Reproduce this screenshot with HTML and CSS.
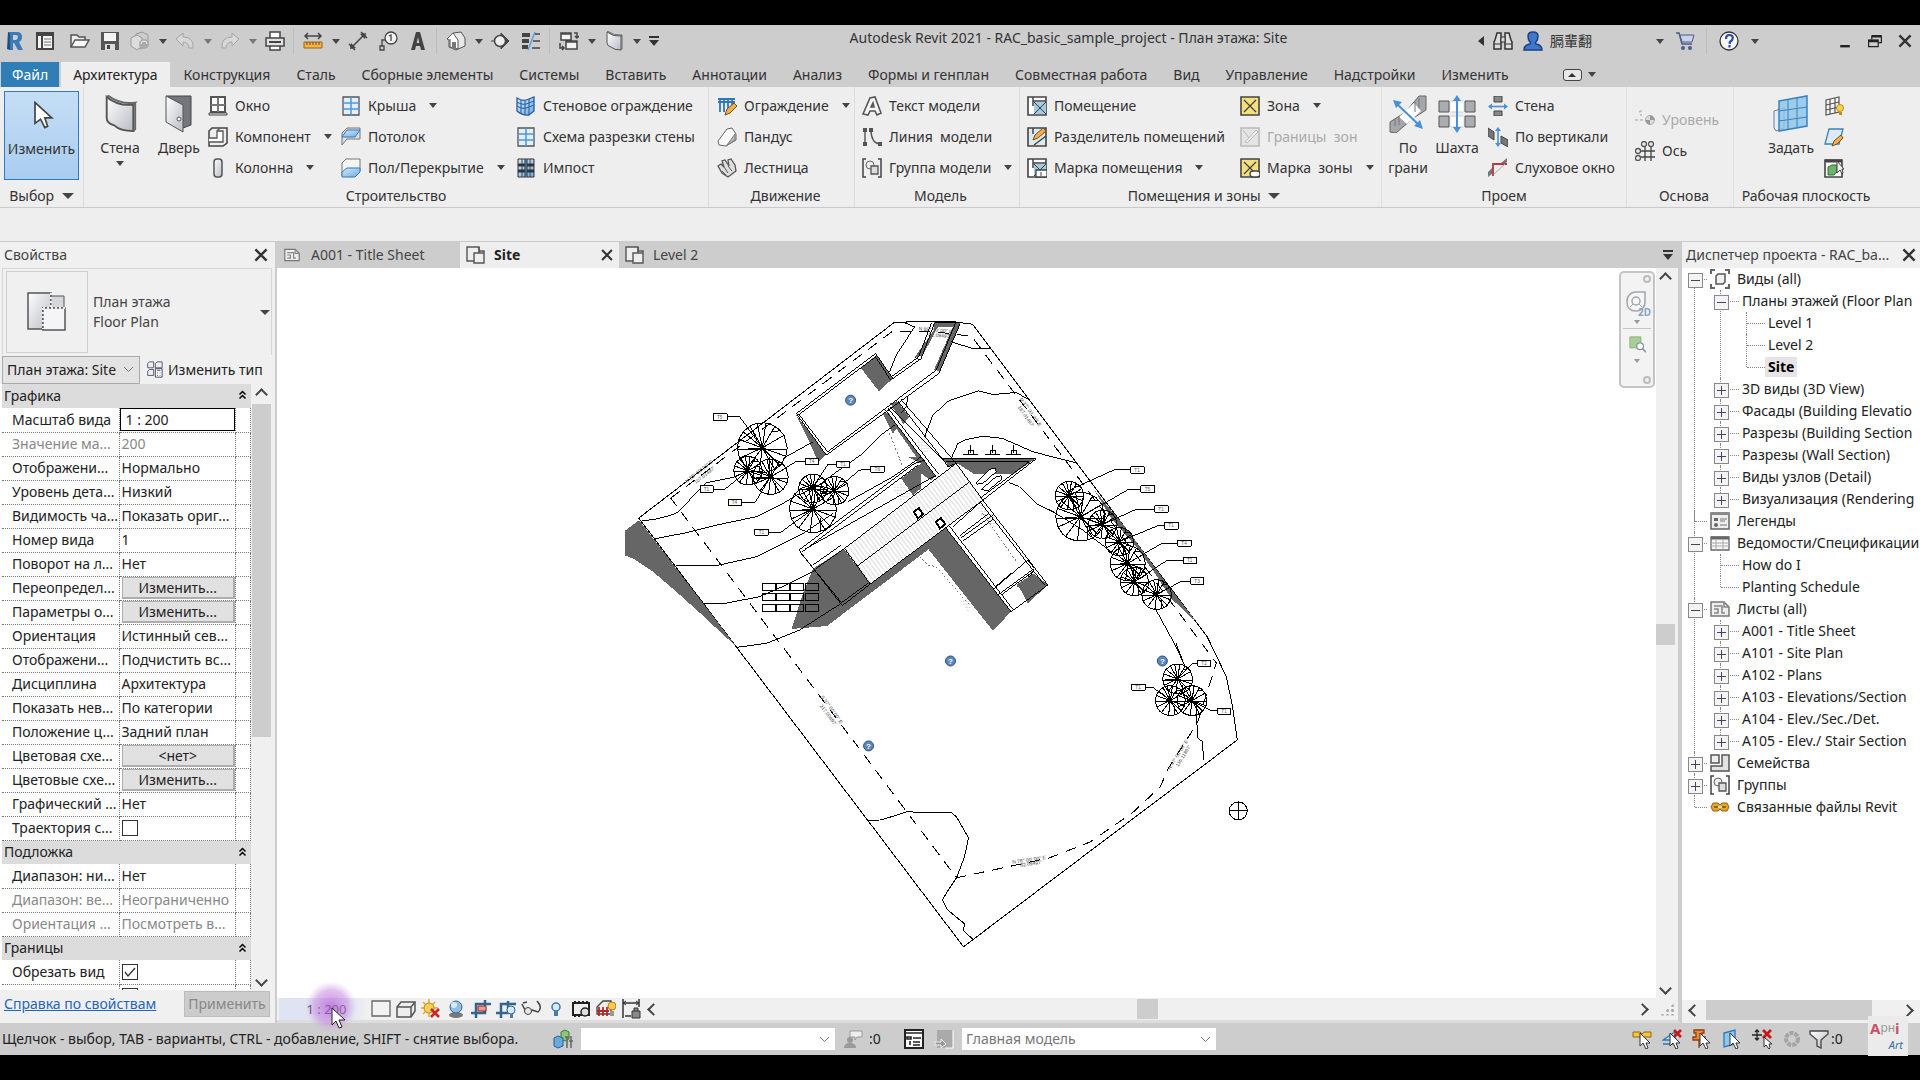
FILE: index.html
```html
<!DOCTYPE html>
<html lang="ru">
<head>
<meta charset="utf-8">
<title>Autodesk Revit 2021 - RAC_basic_sample_project - План этажа: Site</title>
<link rel="stylesheet" href="styles.css">
</head>
<body>
<svg class="defs" aria-hidden="true">
<defs>
<linearGradient id="gr" x1="0" y1="0" x2="1" y2="1"><stop offset="0" stop-color="#fff"/><stop offset="1" stop-color="#b9bcc4"/></linearGradient>
<linearGradient id="bl" x1="0" y1="0" x2="1" y2="1"><stop offset="0" stop-color="#d3e9fb"/><stop offset="1" stop-color="#6fabdf"/></linearGradient>
<radialGradient id="glow"><stop offset="0" stop-color="#b45fd6" stop-opacity=".75"/><stop offset=".65" stop-color="#c88be2" stop-opacity=".55"/><stop offset="1" stop-color="#d9b0ec" stop-opacity="0"/></radialGradient>
<symbol id="revit" viewBox="0 0 20 20"><path d="M3 1h9q5 0 5 5 0 4-3 5l4 8h-5l-4-7H8v7H4Z" fill="#3b7cb8"/><path d="M3 1l2 2v16l-3-1Z" fill="#1d4f86"/><path d="M8 4h3q2 0 2 2t-2 3H8Z" fill="#cfcfcf"/></symbol>
<symbol id="home" viewBox="0 0 20 20"><path d="M2 2h16v16H2Z" fill="#f4f4f4" stroke="#444" stroke-width="2"/><path d="M2 4h16M7 5v13" stroke="#444" stroke-width="2"/><path d="M9 8h7M9 11h7M9 14h7" stroke="#777"/></symbol>
<symbol id="open" viewBox="0 0 20 20"><path d="M1 16V4h6l2 2h6v3" fill="#eee" stroke="#555" stroke-width="1.5"/><path d="M1 16L5 9h14l-4 7Z" fill="#fafafa" stroke="#555" stroke-width="1.5"/></symbol>
<symbol id="save" viewBox="0 0 20 20"><path d="M1 1h18v18H1Z" fill="#555"/><path d="M4 2h12v8H4Z" fill="#f5f5f5"/><path d="M5 13h10v6H5Z" fill="#ddd"/><path d="M7 14h3v4H7Z" fill="#444"/></symbol>
<symbol id="sync" viewBox="0 0 20 20"><path d="M6 3l6-2 6 3v10l-7 4-6-3Z" fill="#ccc" stroke="#999"/><path d="M1 7l6-3 5 3v8l-5 4-6-4Z" fill="#ddd" stroke="#999"/><circle cx="14" cy="13" r="5" fill="#aaa"/><path d="M11 13a3 3 0 0 1 6 0" stroke="#eee" fill="none"/></symbol>
<symbol id="undo" viewBox="0 0 20 20"><path d="M1 8l7-6v4q11 0 10 11h-4q0-6-6-6v4Z" fill="#d8d8d8" stroke="#a6a6a6"/></symbol>
<symbol id="redo" viewBox="0 0 20 20"><path d="M19 8l-7-6v4Q1 6 2 17h4q0-6 6-6v4Z" fill="#d8d8d8" stroke="#a6a6a6"/></symbol>
<symbol id="print" viewBox="0 0 20 20"><path d="M5 7V1h10v6M5 14v5h10v-5" fill="#fff" stroke="#444" stroke-width="1.5"/><path d="M1 7h18v8H1Z" fill="#e3e3e3" stroke="#444" stroke-width="1.5"/><path d="M4 11h12" stroke="#444" stroke-width="2"/></symbol>
<symbol id="measure" viewBox="0 0 20 20"><path d="M2 5h16M5 2L2 5l3 3M15 2l3 3-3 3" stroke="#444" fill="none" stroke-width="1.5"/><path d="M1 11h18v6H1Z" fill="#efb34a" stroke="#9a6616"/><path d="M4 11v3M7 11v3M10 11v3M13 11v3M16 11v3" stroke="#7a4c08"/></symbol>
<symbol id="dim" viewBox="0 0 20 20"><path d="M4 16L16 4M1 13l6 6M13 1l6 6" stroke="#444" stroke-width="1.5"/><path d="M2 18l1-6 5 5ZM18 2l-6 1 5 5Z" fill="#444"/></symbol>
<symbol id="tag" viewBox="0 0 20 20"><circle cx="13" cy="7" r="6" fill="#f3f3f3" stroke="#444" stroke-width="1.3"/><path d="M11 5l2-1v6M7 9H4v6M2 15h4v4H2Z" stroke="#444" fill="none" stroke-width="1.3"/></symbol>
<symbol id="textA" viewBox="0 0 20 20"><path d="M3 19L8 1h4l5 18h-4l-1-4H8l-1 4ZM8.700 12h2.600L10 6Z" fill="#444" fill-rule="evenodd"/></symbol>
<symbol id="house" viewBox="0 0 20 20"><path d="M1 8l6-6 8-1 4 6v8l-9 4-7-3V9Z" fill="#e8e8e8" stroke="#555"/><path d="M1 8l6-6 5 7v9l-8-2V8" fill="#fff" stroke="#555"/><path d="M6 11h4v7H6Z" fill="#777"/></symbol>
<symbol id="sect" viewBox="0 0 20 20"><path d="M10 2l8 8-8 8ZM5 10H0" fill="#444" stroke="#444"/><circle cx="9" cy="10" r="5.500" fill="#eee" stroke="#444" stroke-width="1.500"/></symbol>
<symbol id="thin" viewBox="0 0 20 20"><path d="M1 4h8M1 10h7M1 16h6" stroke="#444" stroke-width="4"/><path d="M13 3h6M12 10h7M11 17h8" stroke="#444" stroke-width="1.300"/><path d="M14 1L7 19" stroke="#5b9fd8" stroke-width="1.500"/></symbol>
<symbol id="wins" viewBox="0 0 20 20"><path d="M2 2h10v7H2ZM7 10h11v8H7Z" fill="#f4f4f4" stroke="#444" stroke-width="1.500"/><path d="M2 3h10M7 11h11M1 12v5h4M3 15l2 2-2 2M15 2h3v5M16 5l2 2 2-2" stroke="#444" fill="none" stroke-width="1.500"/></symbol>
<symbol id="wall" viewBox="0 0 20 20"><path d="M3 1q6 5 14 4v14q-7 0-10-3-4-1-4-4Z" fill="url(#gr)" stroke="#555"/><path d="M3 1l1-.500q6 4.500 14 3.500l-1 1M17 19l1-1V4" fill="none" stroke="#666"/></symbol>
<symbol id="bino" viewBox="0 0 20 20"><path d="M2 9l2-7h4v16H1v-7ZM18 9l-2-7h-4v16h7v-7Z" fill="#ddd" stroke="#333" stroke-width="1.500"/><path d="M8 6h4v5H8ZM1 13h7M12 13h7" fill="#ddd" stroke="#333"/></symbol>
<symbol id="user" viewBox="0 0 20 20"><path d="M1 19q0-5 6-6 1-1 0-2-2-2-2-6 0-4 5-4t5 4q0 4-2 6-1 1 0 2 6 1 6 6Z" fill="#3f78cb" stroke="#1c3f87" stroke-width="1.500"/></symbol>
<symbol id="cart" viewBox="0 0 20 20"><path d="M1 2h3l3 11h10" fill="none" stroke="#4b5c8c" stroke-width="1.500"/><path d="M5 4h14l-2 7H7Z" fill="#c9d2e8" stroke="#4b5c8c"/><circle cx="8" cy="17" r="2" fill="#4b5c8c"/><circle cx="15" cy="17" r="2" fill="#4b5c8c"/></symbol>
<symbol id="help" viewBox="0 0 20 20"><circle cx="10" cy="10" r="9" fill="#f7f7f7" stroke="#333" stroke-width="1.300"/><path d="M7 8q0-4 3.300-4 3.500 0 3.500 3 0 2-3 4v2M10.500 14v2.500" fill="none" stroke="#2b4ea8" stroke-width="2.200"/></symbol>
<symbol id="min" viewBox="0 0 20 20"><path d="M4 15h12v3H4Z" fill="#222"/></symbol>
<symbol id="restore" viewBox="0 0 20 20"><path d="M6 8V4h12v8h-4" fill="none" stroke="#222" stroke-width="1.500"/><path d="M6 4h12M2 10h12" stroke="#222" stroke-width="3"/><path d="M2 9h12v8H2Z" fill="none" stroke="#222" stroke-width="1.500"/></symbol>
<symbol id="x" viewBox="0 0 20 20"><path d="M3 3l14 14M17 3L3 17" stroke="#333" stroke-width="3"/></symbol>
<symbol id="arrow" viewBox="0 0 20 20"><path d="M5 1v15l4-3 3 6 2-1-2-6h5Z" fill="#fff" stroke="#444" stroke-width="1.200"/></symbol>
<symbol id="door" viewBox="0 0 28 38"><path d="M1 1h25v29l-8 3" fill="#74767c" stroke="#444"/><path d="M1 1l17 9v27L1 27Z" fill="url(#gr)" stroke="#555"/><circle cx="14" cy="24" r="2" fill="#fff" stroke="#555"/></symbol>
<symbol id="window" viewBox="0 0 20 20"><path d="M3 1h14v15H3Z" fill="#fff" stroke="#555" stroke-width="2"/><path d="M10 2v14M3 9h14" stroke="#777" stroke-width="2"/><path d="M1 17h18v2H1Z" fill="#eee" stroke="#444"/></symbol>
<symbol id="comp" viewBox="0 0 20 20"><path d="M1 4l3-3h15v15l-4 3H1Z" fill="#eee" stroke="#444" stroke-width="1.500"/><path d="M1 11h8V4h6v11H1M9 4l3-3" fill="#fff" stroke="#555" stroke-width="1.300"/></symbol>
<symbol id="column" viewBox="0 0 20 20"><rect x="6" y="1" width="8" height="18" rx="3" fill="url(#gr)" stroke="#555" stroke-width="1.500"/></symbol>
<symbol id="roof" viewBox="0 0 20 20"><path d="M2 1h16v18H2Z" fill="#e2effa" stroke="#555" stroke-width="1.300"/><path d="M10 1v18M2 7h16M2 13h16" stroke="#4f97dc" stroke-width="1.500"/></symbol>
<symbol id="ceil" viewBox="0 0 20 20"><path d="M1 6l5-5h13v11H6l-5 6Z" fill="#ddd" stroke="#777"/><path d="M6 3h13l-5 7H1Z" fill="url(#bl)" stroke="#2f78c4"/></symbol>
<symbol id="floor" viewBox="0 0 20 20"><path d="M1 5l4-4h14v12l-5 5H1Z" fill="#f4f4f4" stroke="#777"/><path d="M1 18v-4l5-4h13v4l-5 5H1Z" fill="url(#bl)" stroke="#2f78c4"/></symbol>
<symbol id="curtain" viewBox="0 0 20 20"><path d="M1 2q6 4 12 1l5-2v14l-5 4q-6 1-12-4Z" fill="url(#bl)" stroke="#245d9c" stroke-width="1.300"/><path d="M1 6q6 4 12 1l5-2M1 10q6 4 12 1l5-2M5 4v13M9 5v14M13 3v16" fill="none" stroke="#245d9c"/></symbol>
<symbol id="mullion" viewBox="0 0 20 20"><path d="M2 1h16v18H2Z" fill="url(#bl)" stroke="#333"/><path d="M6 1v18M14 1v18" stroke="#444" stroke-width="1"/><path d="M10 1v18M2 7h16M2 13h16" stroke="#333" stroke-width="3"/><path d="M10 1v18" stroke="#4f9be0"/></symbol>
<symbol id="rail" viewBox="0 0 20 20"><path d="M1 3h17M1 6h17M3 3v13M7 3v13M11 3v12M15 3v8" stroke="#3077bd" stroke-width="1.800"/><path d="M8 19l2-6 7-6 3 3-7 7Z" fill="#efb052" stroke="#7c4e12"/></symbol>
<symbol id="ramp" viewBox="0 0 20 20"><path d="M1 14L10 2l5-1 4 6v6l-10 6-7-1Z" fill="#fafafa" stroke="#666"/><path d="M10 18l8-11v6l-9 6Z" fill="#bbb" stroke="#777"/></symbol>
<symbol id="stair" viewBox="0 0 20 20"><path d="M1 8l3-2 3 3-2-6 3-1 4 6-1-6 3-1 4 6 1 6-8 6-6-4Z" fill="#ddd" stroke="#555" stroke-width="1.300"/><path d="M7 9l4 6M11 8l4 5M5 13l4 4" stroke="#555"/></symbol>
<symbol id="mtext" viewBox="0 0 20 20"><path d="M1 18L8 2l5-1 6 16-4 2-2-4H8l-2 4ZM9 11h3l-1-4Z" fill="#f5f5f5" stroke="#555" stroke-width="1.600"/></symbol>
<symbol id="mline" viewBox="0 0 20 20"><path d="M3 3v14M9 3q0 13 9 14" fill="none" stroke="#555" stroke-width="1.400"/><path d="M1 1h4v4H1ZM1 15h4v4H1ZM7 1h4v4H7ZM16 15h4v4h-4Z" fill="#555"/></symbol>
<symbol id="group" viewBox="0 0 20 20"><path d="M4 1H1v18h3M16 1h3v18h-3" fill="none" stroke="#444" stroke-width="1.500"/><circle cx="8" cy="7" r="4" fill="#eee" stroke="#666"/><path d="M9 8h7v8H9Z" fill="#ddd" stroke="#555" stroke-width="1.300"/></symbol>
<symbol id="room" viewBox="0 0 20 20"><path d="M1 1h18v18H1Z" fill="#fff" stroke="#444" stroke-width="1.600"/><path d="M6 1v9M6 5h13" stroke="#444" stroke-width="1.500"/><path d="M7 6h12v12H7Z" fill="#a9c9da"/><path d="M7 6l12 12M19 6L7 18" stroke="#245"/></symbol>
<symbol id="roomsep" viewBox="0 0 20 20"><path d="M1 1h18v18H1Z" fill="#dceaf2" stroke="#444" stroke-width="1.600"/><path d="M6 1v6M7 18l12-9" stroke="#444" stroke-width="1.500"/><path d="M6 13l2-5 8-7 3 3-8 7Z" fill="#efb052" stroke="#7c4e12"/></symbol>
<symbol id="roomtag" viewBox="0 0 20 20"><use href="#room"/><path d="M9 12h11v7H9Z" fill="#fff" stroke="#444" stroke-width="1.300"/><path d="M14 14v4" stroke="#444"/></symbol>
<symbol id="zone" viewBox="0 0 20 20"><path d="M1 1h18v18H1Z" fill="#f3df7c" stroke="#444" stroke-width="1.600"/><path d="M4 4l12 12M16 4L4 16" stroke="#444" stroke-width="1.300"/></symbol>
<symbol id="zonesep" viewBox="0 0 20 20"><path d="M1 1h18v18H1Z" fill="#e4e4e4" stroke="#bbb" stroke-width="1.600"/><path d="M5 15L16 3l2 2L7 16ZM3 3l6 8" fill="#eee" stroke="#bbb"/></symbol>
<symbol id="zonetag" viewBox="0 0 20 20"><use href="#zone"/><rect x="10" y="13" width="10" height="6" rx="3" fill="#fff" stroke="#444" stroke-width="1.300"/></symbol>
<symbol id="face" viewBox="0 0 38 38"><path d="M1 37V27l14-9 6 8-14 12ZM19 14L30 1h7v14l-11 7Z" fill="#a4a6aa" stroke="#666"/><path d="M10 22L25 8l7 8-14 13Z" fill="#fff"/><path d="M6 31V24M10 30V21M30 13V3M26 17V7" stroke="#777"/><path d="M7 8l24 23" stroke="#4a90d9" stroke-width="2"/><path d="M4 5l9 2-6 6ZM34 34l-3-9-6 6Z" fill="#4a90d9"/></symbol>
<symbol id="shaft" viewBox="0 0 38 38"><path d="M1 6h10v11H1ZM27 6h10v11H27ZM1 21h10v11H1ZM27 21h10v11H27Z" fill="#aaacb0" stroke="#555"/><path d="M13 6h12v11H13ZM13 21h12v11H13Z" fill="#fff"/><path d="M13 6h12M13 17h12M13 21h12M13 32h12" stroke="#ccc"/><path d="M19 4v30" stroke="#4a90d9" stroke-width="2"/><path d="M19 0l4 6h-8ZM19 38l4-6h-8Z" fill="#4a90d9"/></symbol>
<symbol id="opw" viewBox="0 0 20 20"><path d="M6 0h8v6H6ZM6 15h8v5H6Z" fill="#888" stroke="#444"/><path d="M2 10.500h16" stroke="#4a90d9" stroke-width="1.600"/><path d="M0 10.500l4-3v6ZM20 10.500l-4-3v6Z" fill="#4a90d9"/></symbol>
<symbol id="opv" viewBox="0 0 20 20"><path d="M0 1l6 4v8l-6-4ZM13 9l7 4v7l-7-4Z" fill="#777" stroke="#444"/><path d="M10 2v16" stroke="#4a90d9" stroke-width="1.600"/><path d="M10 0l3 4H7ZM10 20l3-4H7Z" fill="#4a90d9"/></symbol>
<symbol id="dormer" viewBox="0 0 20 20"><path d="M0 19v-5l5-5v6ZM13 5l6-5v4l-3 2Z" fill="#777"/><path d="M5 18V6h14" fill="none" stroke="#b8383d" stroke-width="1.800"/><path d="M6 16L17 6" stroke="#aaa"/></symbol>
<symbol id="level" viewBox="0 0 20 20"><path d="M0 10h10M4 2l2-1v5" stroke="#bbb" stroke-width="1.500" stroke-dasharray="3 2" fill="none"/><circle cx="15" cy="10" r="4.500" fill="#ddd" stroke="#aaa"/><path d="M15 10V5.500A4.500 4.500 0 0 1 19.500 10ZM15 10v4.500A4.500 4.500 0 0 1 10.500 10Z" fill="#999"/></symbol>
<symbol id="grid" viewBox="0 0 20 20"><path d="M10 6v14M16 6v14M6 10h14M6 16h14" stroke="#444" stroke-width="1.300"/><circle cx="9" cy="3" r="2.500" fill="none" stroke="#555" stroke-width="1.300"/><circle cx="16" cy="3" r="2.500" fill="none" stroke="#555" stroke-width="1.300"/><circle cx="3" cy="10" r="2.500" fill="none" stroke="#555" stroke-width="1.300"/><circle cx="3" cy="17" r="2.500" fill="none" stroke="#555" stroke-width="1.300"/></symbol>
<symbol id="setwp" viewBox="0 0 38 38"><path d="M2 16l10-3v20l-8 3-2-3Z" fill="#e6eef5" stroke="#6a7f94"/><path d="M7 6L35 1v30L7 36Z" fill="#8fc6ea" fill-opacity=".85" stroke="#3b83bd" stroke-width="1.500"/><path d="M16 4v31M25 3v30M7 16l28-4M7 26l28-4" stroke="#3b83bd"/></symbol>
<symbol id="showwp" viewBox="0 0 20 20"><path d="M2 4l13-3v15L2 19ZM6 3v15M11 2v15M2 9l13-3M2 14l13-3" fill="#f3f3f3" stroke="#555" stroke-width="1.200"/><circle cx="16" cy="12" r="3.500" fill="#f7d34b" stroke="#c78c13"/><path d="M15 16h3v3h-3Z" fill="#c78c13"/></symbol>
<symbol id="refpl" viewBox="0 0 20 20"><path d="M5 2h14l-4 15H1Z" fill="#dcebf8" stroke="#3b83bd" stroke-width="1.300"/><path d="M8 19l2-5 7-6 2 3-6 6Z" fill="#efb052" stroke="#7c4e12"/></symbol>
<symbol id="viewer" viewBox="0 0 20 20"><path d="M1 2h17v17H1Z" fill="#fff" stroke="#444" stroke-width="1.600"/><path d="M1 3h17" stroke="#444" stroke-width="3"/><path d="M4 9l4-2h5v7l-3 3H4Z" fill="#6db36a" stroke="#2e6b30"/><path d="M13 3v12l3-3 2 4 1-1-1-4h2Z" fill="#eee" stroke="#444"/></symbol>
<symbol id="plan" viewBox="0 0 20 20"><path d="M1 2h12v4h5v12H8v-2H1Z" fill="#eee" stroke="#555" stroke-width="1.400"/><path d="M8 16V8h5V2M8 8h10" fill="none" stroke="#555" stroke-width="1.400"/></symbol>
<symbol id="sheet" viewBox="0 0 20 20"><path d="M1 3h13l5 5v9H1Z" fill="#eee" stroke="#777" stroke-width="1.500"/><path d="M4 7h8v7h3M4 14h4v-4H4M14 3v5h5" fill="none" stroke="#888" stroke-width="1.500"/></symbol>
<symbol id="bigplan" viewBox="0 0 40 40"><path d="M1 1h23v15h-8v21H1Z" fill="url(#gr)" stroke="#555" stroke-width="1.500"/><path d="M24 4h13v12H24Z" fill="#d5d7dc" stroke="#555"/><path d="M16 16h22v22H16Z" fill="#f5f5f8" stroke="#555" stroke-width="1.500"/><path d="M16 16h22M16 16v21M24 1v15" stroke="#eee" stroke-dasharray="2 2" stroke-width="2"/></symbol>
<symbol id="edtype" viewBox="0 0 20 20"><path d="M2 3l2-2h5v7H2ZM11 3l2-2h6v7h-8ZM2 12l2-2h5v7H2Z" fill="#eee" stroke="#446"/><path d="M11 9h8v10h-8Z" fill="#fff" stroke="#335"/><path d="M13 11h4M13 14h1M16 14h1M13 17h1M16 17h1" stroke="#335"/></symbol>
<symbol id="views" viewBox="0 0 20 20"><path d="M1 5V1h4M15 1h4v4M19 15v4h-4M5 19H1v-4" fill="none" stroke="#666" stroke-width="2"/><path d="M6 7l2-2h7v8l-2 2H6Z" fill="#f0f0f0" stroke="#555" stroke-width="1.500"/></symbol>
<symbol id="legend" viewBox="0 0 20 20"><path d="M1 2h18v16H1Z" fill="#eee" stroke="#666" stroke-width="1.500"/><path d="M1 3h18" stroke="#888" stroke-width="2"/><path d="M4 7h4v3H4Z" fill="#666"/><circle cx="6" cy="14" r="2" fill="#666"/><path d="M10 8h7M10 10h5M10 14h7" stroke="#777"/></symbol>
<symbol id="sched" viewBox="0 0 20 20"><path d="M1 4h18v13H1Z" fill="#f6f6f6" stroke="#666" stroke-width="1.300"/><path d="M1 5h18" stroke="#666" stroke-width="3"/><path d="M1 10h18M1 13h18M6 6v11M13 6v11" stroke="#aaa"/></symbol>
<symbol id="family" viewBox="0 0 20 20"><path d="M1 2h8v8H1Z" fill="#eee" stroke="#555" stroke-width="1.500"/><path d="M12 2h7v16H1v-5h11Z" fill="#e3e3e3" stroke="#555" stroke-width="1.500"/></symbol>
<symbol id="link" viewBox="0 0 20 20"><path d="M3 6h5l2 2 2-2h5l2 4-2 4h-5l-2-2-2 2H3L1 10Z" fill="#e0a634" stroke="#94650f"/><path d="M4 10h4M12 10h4" stroke="#7d5207" stroke-width="1.500"/><path d="M8 10h4" stroke="#fff0b5" stroke-width="1.500"/></symbol>
<symbol id="detail" viewBox="0 0 20 20"><path d="M1 2h18v15H1Z" fill="#f2f2f2" stroke="#666" stroke-width="1.300"/></symbol>
<symbol id="cube" viewBox="0 0 20 20"><path d="M1 8l4-5h14v9l-4 6H1Z" fill="#eee" stroke="#555" stroke-width="1.500"/><path d="M1 8h14v10M15 8l4-5" fill="none" stroke="#555" stroke-width="1.500"/></symbol>
<symbol id="sun" viewBox="0 0 20 20"><path d="M8 0v18M0 9h17M2 3l12 12M14 3L2 15" stroke="#e9a72b" stroke-width="1.500"/><circle cx="8" cy="9" r="5" fill="#f8cf58" stroke="#c98516"/><path d="M10 10l8 8M18 10l-8 8" stroke="#c62828" stroke-width="2.600"/></symbol>
<symbol id="shadow" viewBox="0 0 20 20"><ellipse cx="10" cy="16" rx="7" ry="3" fill="#777"/><circle cx="10" cy="8" r="6" fill="#8fbde3" stroke="#34689b"/><circle cx="8" cy="6" r="3" fill="#d8ebfa"/></symbol>
<symbol id="crop" viewBox="0 0 20 20"><path d="M5 19V5h15M0 14h14V1" fill="none" stroke="#33648f" stroke-width="2.500"/><path d="M7 7h8v5H7Z" fill="#e69b95" stroke="#a22"/></symbol>
<symbol id="cropv" viewBox="0 0 20 20"><path d="M5 19V5h15M0 14h12V2" fill="none" stroke="#33648f" stroke-width="2.500"/><circle cx="15" cy="11" r="4" fill="#d8ebfa" stroke="#34689b"/><path d="M14 15h3v4h-3Z" fill="#57a"/></symbol>
<symbol id="glass" viewBox="0 0 20 20"><path d="M1 5l4 8q4 3 6-2l6 2q4-4 1-8M2 4l4-1M16 2l3 4" fill="none" stroke="#444" stroke-width="1.500"/><circle cx="7" cy="12" r="3.500" fill="#e8e8e8" stroke="#444"/></symbol>
<symbol id="bulb" viewBox="0 0 20 20"><circle cx="10" cy="8" r="4" fill="#d8ebfa" stroke="#3b76b0" stroke-width="1.500"/><path d="M8 12h4v5H8Z" fill="#4a7aa8"/></symbol>
<symbol id="chip" viewBox="0 0 20 20"><path d="M2 4h16v12H2Z" fill="#eee" stroke="#222" stroke-width="2"/><path d="M4 2v3M8 2v3M12 2v3M16 2v3M4 15v3M8 15v3" stroke="#222" stroke-width="2"/><circle cx="14" cy="13" r="4" fill="#ddd" stroke="#222" stroke-width="1.500"/></symbol>
<symbol id="analyt" viewBox="0 0 20 20"><path d="M1 8l6-6h8v13H1Z" fill="#eee" stroke="#444" stroke-width="1.300"/><path d="M3 8v9M7 8v9M11 8v9M1 12h12" stroke="#b3262b" stroke-width="1.800"/><circle cx="16" cy="7" r="4" fill="#f7cb4c" stroke="#c47d11"/><path d="M14 12h4v5h-4Z" fill="#999"/></symbol>
<symbol id="lockd" viewBox="0 0 20 20"><path d="M2 0v19M18 0v8M2 4h16M4 17h6" stroke="#333" stroke-width="1.500" fill="none"/><path d="M5 2L2 4l3 2M15 2l3 2-3 2" fill="none" stroke="#333"/><path d="M11 12h8v7h-8ZM13 12V9h4v3" fill="#888" stroke="#333"/></symbol>
<symbol id="wset" viewBox="0 0 20 20"><path d="M8 3l4-2 4 2v7l-4 2-4-2Z" fill="#8fc47f" stroke="#3d7a34"/><path d="M1 9l4-2 5 2v8l-5 2-4-2Z" fill="#6aa9dc" stroke="#245d9c"/><path d="M14 8v11M18 7v12M12 8h4M16 12h4" stroke="#666" stroke-width="1.500"/></symbol>
<symbol id="edreq" viewBox="0 0 20 20"><path d="M7 2h12v6h-5l-2 3V8H7Z" fill="#eee" stroke="#999"/><circle cx="7" cy="11" r="3" fill="#999"/><path d="M1 19q0-5 6-5t6 5Z" fill="#999"/></symbol>
<symbol id="opts" viewBox="0 0 20 20"><path d="M1 1h18v18H1Z" fill="#fff" stroke="#222" stroke-width="2"/><path d="M1 4h18M3 8h4v2H3ZM9 9h8M6 12v4M9 13h7M9 16h7" stroke="#222" stroke-width="1.600" fill="none"/></symbol>
<symbol id="optin" viewBox="0 0 20 20"><path d="M3 1h16v18h-7H3Z" fill="#aaa"/><path d="M19 1v18h-8" fill="none" stroke="#fff"/><path d="M1 13h6v-3l5 5-5 4v-3H1Z" fill="#999" stroke="#eee"/></symbol>
<symbol id="ptr" viewBox="0 0 20 20"><path d="M8 4v13l3-3 3 6 2-1-2-5h4Z" fill="#fff" stroke="#333"/></symbol>
<symbol id="sellink" viewBox="0 0 20 20"><path d="M1 3h7l2 2 2-2h7v5h-7l-2-2-2 2H1Z" fill="#f3c83e" stroke="#94650f"/><use href="#ptr"/></symbol>
<symbol id="selund" viewBox="0 0 20 20"><path d="M1 11L13 3v8ZM1 15h12" fill="#bfe0f5" stroke="#2f78b4" stroke-width="1.300"/><path d="M12 1l7 7M19 1l-7 7" stroke="#c31a1a" stroke-width="2.600"/><use href="#ptr"/></symbol>
<symbol id="selpin" viewBox="0 0 20 20"><path d="M2 1h10v3h-2v4h3v3H1V8h3V4H2ZM7 11v8" fill="#f08b3c" stroke="#8f3e0d" stroke-width="1.300"/><use href="#ptr"/></symbol>
<symbol id="selface" viewBox="0 0 20 20"><path d="M2 4l11-3v14L2 18Z" fill="#8cc7ef" stroke="#2f78b4" stroke-width="1.300"/><use href="#ptr"/></symbol>
<symbol id="drag" viewBox="0 0 20 20"><path d="M5 1v10M0 6h10M3 3l2-2 2 2M3 9l2 2 2-2" fill="none" stroke="#222" stroke-width="1.300"/><path d="M11 1l8 8M19 1l-8 8" stroke="#c31a1a" stroke-width="2.800"/><g transform="translate(2 2)"><path d="M10 6v10l2-2 3 4 1-1-1-4h3Z" fill="#fff" stroke="#333"/></g></symbol>
<symbol id="gear" viewBox="0 0 20 20"><circle cx="10" cy="10" r="6" fill="none" stroke="#a4a4a4" stroke-width="4" stroke-dasharray="4 1"/></symbol>
<symbol id="filter" viewBox="0 0 20 20"><path d="M1 2h18v3l-7 6v8l-4-2v-6L1 5Z" fill="url(#gr)" stroke="#444" stroke-width="1.300"/></symbol>
<symbol id="wheel" viewBox="0 0 24 24"><path d="M2 12A9 9 0 0 1 11 2h9v9a9 9 0 0 1-9 10Q2 21 2 12Z" fill="#f6f6f6" stroke="#a3a7ad" stroke-width="1.500"/><circle cx="11" cy="11" r="4" fill="none" stroke="#a3a7ad" stroke-width="1.500"/><path d="M8 14l-3 3M14 14l3 3" stroke="#a3a7ad"/></symbol>
<symbol id="zoomr" viewBox="0 0 20 20"><path d="M1 1h13v13H1Z" fill="#a9cf98" stroke="#85ad75"/><circle cx="13" cy="12" r="4" fill="#fff" stroke="#8c949c" stroke-width="1.500"/><path d="M16 15l4 4" stroke="#8c949c" stroke-width="2"/></symbol>
<symbol id="tree" viewBox="-100 -100 200 200" overflow="visible"><path vector-effect="non-scaling-stroke" d="M100 0L94 34 71 71 50 87 17 98-17 98-50 87-71 71-91 42-100 0-94-34-77-64-50-87-26-97 8-100 34-94 64-77 87-50ZM98 8H-98L0 0M94 34L0 0 71 71M50 87L0 0-12 98M-60 80L0 0-91 42M-94-34L0 0-77-64M-50-87L0 0-20-98M14-99L0 0 50-86M38-65L72-68M0 0L87-50M30 38L30 94"/><circle r="9" fill="#000"/></symbol>
<pattern id="slats" width="11" height="11" patternUnits="userSpaceOnUse" patternTransform="rotate(-36)"><path d="M5 0v11" stroke="#d6d6d6" stroke-width="3"/></pattern>
<pattern id="dots" width="9" height="9" patternUnits="userSpaceOnUse"><path d="M2 2h3v3H2Z" fill="#999"/></pattern>
</defs>
</svg>

<div class="app">
<header class="titlebar">
  <div class="qat">
    <button class="tb" aria-label="Revit"><svg class="i"><use href="#revit"/></svg></button>
    <button class="tb home" aria-label="Главная"><svg class="i"><use href="#home"/></svg></button>
    <button class="tb" aria-label="Открыть"><svg class="i"><use href="#open"/></svg></button>
    <button class="tb" aria-label="Сохранить"><svg class="i"><use href="#save"/></svg></button>
    <button class="tb" aria-label="Синхронизация"><svg class="i"><use href="#sync"/></svg></button><button class="dd" aria-label="Меню"></button>
    <button class="tb" aria-label="Отменить"><svg class="i"><use href="#undo"/></svg></button><button class="dd dim" aria-label="Меню"></button>
    <button class="tb" aria-label="Повторить"><svg class="i"><use href="#redo"/></svg></button><button class="dd dim" aria-label="Меню"></button>
    <button class="tb" aria-label="Печать"><svg class="i"><use href="#print"/></svg></button><i class="sep"></i>
    <button class="tb" aria-label="Измерить"><svg class="i"><use href="#measure"/></svg></button><button class="dd" aria-label="Меню"></button>
    <button class="tb" aria-label="Размер"><svg class="i"><use href="#dim"/></svg></button>
    <button class="tb" aria-label="Марка"><svg class="i"><use href="#tag"/></svg></button>
    <button class="tb" aria-label="Текст"><svg class="i"><use href="#textA"/></svg></button><i class="sep"></i>
    <button class="tb" aria-label="3D вид"><svg class="i"><use href="#house"/></svg></button><button class="dd" aria-label="Меню"></button>
    <button class="tb" aria-label="Разрез"><svg class="i"><use href="#sect"/></svg></button>
    <button class="tb" aria-label="Тонкие линии"><svg class="i"><use href="#thin"/></svg></button><i class="sep"></i>
    <button class="tb" aria-label="Окна"><svg class="i"><use href="#wins"/></svg></button><button class="dd" aria-label="Меню"></button>
    <button class="tb" aria-label="Стена"><svg class="i"><use href="#wall"/></svg></button><button class="dd" aria-label="Меню"></button>
    <button class="dd custom" aria-label="Настройка"></button>
  </div>
  <h1>Autodesk Revit 2021 - RAC_basic_sample_project - План этажа: Site</h1>
  <div class="info">
    <button class="dd left" aria-label="Свернуть"></button>
    <button class="tb" aria-label="Поиск"><svg class="i"><use href="#bino"/></svg></button>
    <button class="tb" aria-label="Пользователь"><svg class="i"><use href="#user"/></svg></button>
    <button class="name">膈輩翻</button><button class="dd" aria-label="Меню"></button>
    <button class="tb wide" aria-label="Магазин"><svg class="i"><use href="#cart"/></svg></button><i class="sep"></i>
    <button class="tb wide" aria-label="Справка"><svg class="i"><use href="#help"/></svg></button><button class="dd" aria-label="Меню"></button>
  </div>
  <div class="winbtns">
    <button class="tb" aria-label="Свернуть"><svg class="i s"><use href="#min"/></svg></button>
    <button class="tb" aria-label="Восстановить"><svg class="i s"><use href="#restore"/></svg></button>
    <button class="tb" aria-label="Закрыть"><svg class="i s"><use href="#x"/></svg></button>
  </div>
</header>

<nav class="tabs">
  <button class="file">Файл</button><button class="on">Архитектура</button><button>Конструкция</button><button>Сталь</button><button>Сборные элементы</button><button>Системы</button><button>Вставить</button><button>Аннотации</button><button>Анализ</button><button>Формы и генплан</button><button>Совместная работа</button><button>Вид</button><button>Управление</button><button>Надстройки</button><button>Изменить</button>
  <button class="minrib" aria-label="Свернуть ленту"><span></span></button><button class="dd" aria-label="Меню"></button>
</nav>

<section class="ribbon">
  <div class="panel p-sel"><div class="pbody"><button class="big mod"><svg class="bi ar"><use href="#arrow"/></svg>Изменить</button></div><h2>Выбор <i class="tri"></i></h2></div>
  <div class="panel p-build"><div class="pbody">
    <button class="big"><svg class="bi"><use href="#wall"/></svg>Стена<i class="tri sm"></i></button>
    <button class="big"><svg class="bi"><use href="#door"/></svg>Дверь</button>
    <div class="col"><button><svg class="i"><use href="#window"/></svg>Окно</button><button><svg class="i"><use href="#comp"/></svg>Компонент<i class="tri sm"></i></button><button><svg class="i"><use href="#column"/></svg>Колонна<i class="tri sm"></i></button></div>
    <div class="col"><button><svg class="i"><use href="#roof"/></svg>Крыша<i class="tri sm"></i></button><button><svg class="i"><use href="#ceil"/></svg>Потолок</button><button><svg class="i"><use href="#floor"/></svg>Пол/Перекрытие<i class="tri sm"></i></button></div>
    <div class="col"><button><svg class="i"><use href="#curtain"/></svg>Стеновое ограждение</button><button><svg class="i"><use href="#roof"/></svg>Схема разрезки стены</button><button><svg class="i"><use href="#mullion"/></svg>Импост</button></div>
  </div><h2>Строительство</h2></div>
  <div class="panel p-circ"><div class="pbody"><div class="col"><button><svg class="i"><use href="#rail"/></svg>Ограждение<i class="tri sm"></i></button><button><svg class="i"><use href="#ramp"/></svg>Пандус</button><button><svg class="i"><use href="#stair"/></svg>Лестница</button></div></div><h2>Движение</h2></div>
  <div class="panel p-model"><div class="pbody"><div class="col"><button><svg class="i"><use href="#mtext"/></svg>Текст модели</button><button><svg class="i"><use href="#mline"/></svg>Линия&nbsp; модели</button><button><svg class="i"><use href="#group"/></svg>Группа модели<i class="tri sm"></i></button></div></div><h2>Модель</h2></div>
  <div class="panel p-room"><div class="pbody">
    <div class="col"><button><svg class="i"><use href="#room"/></svg>Помещение</button><button><svg class="i"><use href="#roomsep"/></svg>Разделитель помещений</button><button><svg class="i"><use href="#roomtag"/></svg>Марка помещения<i class="tri sm"></i></button></div>
    <div class="col"><button><svg class="i"><use href="#zone"/></svg>Зона<i class="tri sm"></i></button><button disabled><svg class="i"><use href="#zonesep"/></svg>Границы&nbsp; зон</button><button><svg class="i"><use href="#zonetag"/></svg>Марка&nbsp; зоны<i class="tri sm"></i></button></div>
  </div><h2>Помещения и зоны <i class="tri"></i></h2></div>
  <div class="panel p-open"><div class="pbody">
    <button class="big"><svg class="bi"><use href="#face"/></svg>По<br>грани</button>
    <button class="big"><svg class="bi"><use href="#shaft"/></svg>Шахта</button>
    <div class="col"><button><svg class="i"><use href="#opw"/></svg>Стена</button><button><svg class="i"><use href="#opv"/></svg>По вертикали</button><button><svg class="i"><use href="#dormer"/></svg>Слуховое окно</button></div>
  </div><h2>Проем</h2></div>
  <div class="panel p-datum"><div class="pbody"><div class="col two"><button disabled><svg class="i"><use href="#level"/></svg>Уровень</button><button><svg class="i"><use href="#grid"/></svg>Ось</button></div></div><h2>Основа</h2></div>
  <div class="panel p-wp"><div class="pbody">
    <button class="big"><svg class="bi"><use href="#setwp"/></svg>Задать</button>
    <div class="col"><button aria-label="Показать"><svg class="i"><use href="#showwp"/></svg></button><button aria-label="Опорная плоскость"><svg class="i"><use href="#refpl"/></svg></button><button aria-label="Просмотр"><svg class="i"><use href="#viewer"/></svg></button></div>
  </div><h2>Рабочая плоскость</h2></div>
</section>
<div class="optbar"></div>

<main class="work">
<aside class="props">
  <div class="phead"><h2>Свойства</h2><button class="close" aria-label="Закрыть"><svg class="i s"><use href="#x"/></svg></button></div>
  <button class="typesel"><span class="thumb"><svg><use href="#bigplan"/></svg></span><span class="tname">План этажа<br>Floor Plan</span><i class="tri"></i></button>
  <div class="inst"><select aria-label="Экземпляр"><option>План этажа: Site</option></select><button><svg class="i"><use href="#edtype"/></svg>Изменить тип</button></div>
  <div class="pscroll">
    <div class="ptable"><table>
      <colgroup><col class="c1"><col class="c2"><col class="c3"></colgroup>
      <tbody>
      <tr class="grp"><th colspan="3">Графика</th></tr>
      <tr><th>Масштаб вида</th><td class="edit"><input aria-label="Масштаб вида" value="1 : 200"></td><td></td></tr>
      <tr class="off"><th>Значение ма...</th><td>200</td><td></td></tr>
      <tr><th>Отображени...</th><td>Нормально</td><td></td></tr>
      <tr><th>Уровень дета...</th><td>Низкий</td><td></td></tr>
      <tr><th>Видимость ча...</th><td>Показать ориг...</td><td></td></tr>
      <tr><th>Номер вида</th><td>1</td><td></td></tr>
      <tr><th>Поворот на л...</th><td>Нет</td><td></td></tr>
      <tr><th>Переопредел...</th><td><button>Изменить...</button></td><td></td></tr>
      <tr><th>Параметры о...</th><td><button>Изменить...</button></td><td></td></tr>
      <tr><th>Ориентация</th><td>Истинный сев...</td><td></td></tr>
      <tr><th>Отображени...</th><td>Подчистить вс...</td><td></td></tr>
      <tr><th>Дисциплина</th><td>Архитектура</td><td></td></tr>
      <tr><th>Показать нев...</th><td>По категории</td><td></td></tr>
      <tr><th>Положение ц...</th><td>Задний план</td><td></td></tr>
      <tr><th>Цветовая схе...</th><td><button>&lt;нет&gt;</button></td><td></td></tr>
      <tr><th>Цветовые схе...</th><td><button>Изменить...</button></td><td></td></tr>
      <tr><th>Графический ...</th><td>Нет</td><td></td></tr>
      <tr><th>Траектория с...</th><td><input type="checkbox" aria-label="Траектория солнца"></td><td></td></tr>
      <tr class="grp"><th colspan="3">Подложка</th></tr>
      <tr><th>Диапазон: ни...</th><td>Нет</td><td></td></tr>
      <tr class="off"><th>Диапазон: ве...</th><td>Неограниченно</td><td></td></tr>
      <tr class="off"><th>Ориентация ...</th><td>Посмотреть в...</td><td></td></tr>
      <tr class="grp"><th colspan="3">Границы</th></tr>
      <tr><th>Обрезать вид</th><td><input type="checkbox" checked aria-label="Обрезать вид"></td><td></td></tr>
      <tr><th></th><td><input type="checkbox" aria-label="Показать границу"></td><td></td></tr>
      </tbody>
    </table></div>
    <div class="vbar"><i class="ch up"></i><i class="thumbv"></i><i class="ch down"></i></div>
  </div>
  <div class="pfoot"><a href="#help-props">Справка по свойствам</a><button disabled>Применить</button></div>
</aside>

<section class="view">
  <div class="vtabs"><button><svg class="i s"><use href="#sheet"/></svg>A001 - Title Sheet</button><button class="on"><svg class="i"><use href="#plan"/></svg>Site<svg class="i xs"><use href="#x"/></svg></button><button><svg class="i"><use href="#plan"/></svg>Level 2</button><i class="dd custom"></i></div>
  <div class="canvas">
    <div class="sheet">
<svg class="drawing" viewBox="277 268 1380 730" preserveAspectRatio="xMidYMid meet">
<g class="ln">
<path d="M639 518L895 322 950 321 973 324 1075 460 1208 637 1220 662 1227 677 1233 705 1238 740 964 947Z"/>
<path class="dash" d="M671 498L893 331 930 331 972 336 1068 463 1217 663 1198 723 1168 770 1161 787 1133 813 1091 842 1050 858 957 878Z"/>
</g>
<g class="ln" transform="translate(600 300) scale(.33333)">
<g class="fill">
<path d="M75 693L118 660 410 1040 375 1008 300 938 230 875 160 815 105 778 75 766Z"/>
<path d="M576 987L610 880 640 806 733 746 810 850 1040 683 1235 935 1180 992 987 748 682 978Z"/>
<path d="M785 205L830 165 880 235 838 273ZM590 345L680 462 655 487 636 440ZM872 310L893 303 930 350 912 372ZM850 340L868 340 945 445 1010 528 940 585 905 535 965 490 925 470 880 400Z"/>
<path d="M1030 478H1305L1240 523H1125L1075 490 1050 500ZM1250 855L1303 820 1345 855 1285 910 1265 872ZM1003 66H1080V75L1022 212 1003 210 1060 80H1015L970 165 945 172 1003 90Z"/>
</g>
<path fill="#fff" stroke="none" d="M880 400L925 470 950 470 890 385ZM965 520L1000 545 965 575ZM1208 888L1258 860 1282 905 1240 928Z"/>
<path fill="#fff" d="M735 745L1070 490 1150 600 812 852Z"/><path fill="url(#slats)" stroke="none" d="M735 745L1070 490 1150 600 812 852Z"/>
<path d="M773 798L1110 545M735 745L1070 490 1150 600 812 852Z"/>
<path fill="url(#dots)" stroke="none" d="M950 425L975 410 1000 440 975 465ZM880 565L905 550 935 585 905 605ZM1130 620L1150 610 1200 665 1180 695ZM1085 905L1105 890 1120 920 1105 935Z"/>
<path d="M598 750L945 490 975 480M598 750L728 917 812 852M608 755L955 495M615 748L1005 528M606 762L726 908 805 850M650 805L735 745M640 795L725 735"/>
<path d="M1040 685L1235 935 1345 855 1150 600M1050 678L1240 928M1142 606L1335 855M1060 680L1150 600M1080 705L1165 640M1085 713L1180 645M1092 722L1185 655M1185 865L1285 780 1305 805 1195 885M1190 858L1235 820M1205 885L1300 815M1285 825L1290 832 1300 815"/>
<path d="M858 330L1010 530M866 325L1018 523M895 302L1045 498M903 296L1070 490M872 320L1030 478M880 235L965 175 1005 68M878 228L957 170 996 68M590 340L828 160 880 235M598 343L828 170 872 238M590 340L680 465 1018 220 1082 70M598 343L684 455 1010 210 1068 68M1005 68H1082M945 172L965 180"/>
<path d="M1030 476H1310L1150 600M1040 484H1290L1145 592M1030 476L1045 500 1070 490"/>
<path fill="#fff" d="M1132 545L1170 508 1188 504 1190 515 1150 550 1132 552ZM1145 568L1190 530 1205 527 1207 537 1165 572Z"/>
<path fill="#fff" stroke-width="2" d="M943 635L958 624 970 642 955 655ZM1009 665L1024 654 1037 672 1021 685Z"/>
<path d="M1114 436V460M1092 462H1136M1106 462V450H1122V462M1180 436V460M1158 462H1202M1172 462V450H1188V462M1243 436V460M1221 462H1265M1235 462V450H1251V462"/>
<path d="M490 850h37v22h-37ZM532 850h37v22h-37ZM574 850h37v22h-37ZM619 850h37v22h-37ZM490 880h37v22h-37ZM532 880h37v22h-37ZM574 880h37v22h-37ZM619 880h37v22h-37ZM490 913h37v22h-37ZM532 913h37v22h-37ZM574 913h37v22h-37ZM619 913h37v22h-37Z"/>
<path d="M127 662L165 658 205 648 232 638 320 548 400 532 445 512M165 716L250 700 360 673 470 650 550 610 600 580M228 797H350L470 770 610 700 700 640M310 911H370L480 890 560 855 650 810M412 1042L500 1030 600 990 722 912M550 475L640 425M690 530L790 460 850 400 885 375M745 605L880 530 965 470"/>
<path d="M975 410L1000 345 1050 300 1135 272 1180 283 1250 277 1285 297M1055 475L1075 430 1100 418 1150 408 1210 415 1300 455 1430 488M1230 548L1260 560 1310 610 1370 640M1055 125L1120 145H1172M910 65L945 80 890 165 870 215M925 290L920 320 905 340"/>
<path class="dot" d="M870 400L910 500M960 770L985 795 1010 800 1110 915M1150 640L1255 790"/>
<g class="trees"><use href="#tree" x="413" y="368" width="150" height="150"/><use href="#tree" x="402" y="469" width="86" height="86"/><use href="#tree" x="460" y="477" width="106" height="106"/><use href="#tree" x="597" y="522" width="86" height="86"/><use href="#tree" x="662" y="529" width="86" height="86"/><use href="#tree" x="569" y="556" width="142" height="142"/></g>
<path d="M383 350H420L488 443M617 484H590L515 530M711 493H685L640 560M814 508L780 510 705 572M341 568H375L445 512M425 606H467L513 530M506 697H543L640 627"/>
<g class="tags"><path d="M340 341h42v20h-42ZM617 475h40v18h-40ZM711 484h40v18h-40ZM814 499h40v18h-40ZM301 557h40v20h-40ZM385 597h40v20h-40ZM466 688h40v18h-40Z"/><text x="352" y="356">T5</text><text x="628" y="489">T4</text><text x="722" y="498">T1</text><text x="825" y="513">T6</text><text x="312" y="572">T1</text><text x="396" y="612">T4</text><text x="477" y="702">T1</text></g>
</g>
<g class="ln" transform="translate(1000 300) scale(.33333)">
<path class="shade" d="M285 570L385 690 505 855 595 970 515 895 460 810 410 740 335 655Z"/>
<path d="M150 628L250 690 335 755M470 930L530 1040 555 1095"/>
<g class="trees"><use href="#tree" x="167" y="544" width="86" height="86"/><use href="#tree" x="169" y="576" width="148" height="148"/><use href="#tree" x="267" y="630" width="86" height="86"/><use href="#tree" x="317" y="682" width="86" height="86"/><use href="#tree" x="332" y="737" width="106" height="106"/><use href="#tree" x="362" y="802" width="86" height="86"/><use href="#tree" x="427" y="839" width="90" height="90"/></g>
<path d="M394 509H345L210 570M424 568H387L245 650M466 628H410L310 673M496 677H475L360 725M535 730H487L385 790M551 781H503L405 845M574 843H547L472 884"/>
<g class="tags"><path d="M394 500h40v20h-40ZM424 557h42v20h-42ZM466 617h40v20h-40ZM496 667h40v20h-40ZM535 721h40v18h-40ZM551 771h42v20h-42ZM574 833h40v20h-40Z"/><text x="405" y="515">T1</text><text x="436" y="572">T5</text><text x="477" y="632">T1</text><text x="507" y="682">T1</text><text x="546" y="735">T4</text><text x="563" y="786">T1</text><text x="585" y="848">T3</text></g>
</g>
<g class="ln" transform="translate(1040 460) scale(.33333)">
<path d="M410 550L435 615M470 730L475 835 490 845 492 900"/>
<g class="trees"><use href="#tree" x="370" y="612" width="90" height="90"/><use href="#tree" x="348" y="677" width="90" height="90"/><use href="#tree" x="413" y="677" width="90" height="90"/></g>
<path d="M475 610H460L415 655M317 682H340L393 722M535 752L510 750 458 722"/>
<g class="tags"><path d="M475 601h40v18h-40ZM277 673h40v18h-40ZM535 745h40v18h-40Z"/><text x="486" y="615">T2</text><text x="288" y="687">T1</text><text x="546" y="759">T1</text></g>
</g>
<g class="ln"><path d="M868 821L882 820 907 812 952 813 957 817 969 838 965 857 957 878 949 890 943 900 948 910 965 924 964 931 974 940"/>
<circle cx="1239" cy="811" r="9"/><path d="M1230 811h18M1239 802v18"/></g>
<g class="survey"><text transform="translate(1020 399) rotate(55)">N 37° 00' 00" E</text><text transform="translate(1018 407) rotate(55)">187.01497'</text><text transform="translate(687 483) rotate(-38)">N 55° 00' 00" E</text><text transform="translate(696 484) rotate(-38)">107.01497'</text><text transform="translate(821 697) rotate(54)">S 37° 00' 00" E</text><text transform="translate(820 706) rotate(54)">217.00497'</text><text transform="translate(1171 770) rotate(-58)">N 47° 00' 00" E</text><text transform="translate(1179 767) rotate(-58)">116.11897'</text><text transform="translate(1013 864) rotate(-8)">N 76° 00' 00" E</text><text transform="translate(1021 867) rotate(-8)">82.09497'</text><text transform="translate(919 330) rotate(5)">N 85° 00' 00" E</text><text transform="translate(929 336) rotate(5)">82.09497'</text></g>
<g class="marks"><circle cx="851" cy="400" r="5"/><circle cx="951" cy="661" r="5"/><circle cx="1163" cy="661" r="5"/><circle cx="869" cy="746" r="5"/><text x="851" y="403">?</text><text x="951" y="664">?</text><text x="1163" y="664">?</text><text x="869" y="749">?</text></g>
</svg>
      <div class="navbar"><i class="dotb"></i><svg class="whl"><use href="#wheel"/></svg><b>2D</b><i class="tri sm"></i><hr><svg class="i"><use href="#zoomr"/></svg><i class="tri sm"></i><i class="dotb end"></i></div>
    </div>
    <div class="vbar cv"><i class="ch up"></i><i class="thumbv"></i><i class="ch down"></i></div>
  </div>
  <div class="vctl">
    <button class="scale">1 : 200<svg class="cur" viewBox="0 0 60 60"><circle cx="30" cy="30" r="26" fill="url(#glow)"/><path d="M31 31v17l4-4 3 7 3-1-3-7h6Z" fill="#fff" stroke="#222"/></svg></button>
    <button class="vb" aria-label="Детализация"><svg class="i"><use href="#detail"/></svg></button><button class="vb" aria-label="Стиль"><svg class="i"><use href="#cube"/></svg></button><button class="vb" aria-label="Солнце"><svg class="i"><use href="#sun"/></svg></button><button class="vb" aria-label="Тени"><svg class="i"><use href="#shadow"/></svg></button><button class="vb" aria-label="Обрезка"><svg class="i"><use href="#crop"/></svg></button><button class="vb" aria-label="Граница"><svg class="i"><use href="#cropv"/></svg></button><button class="vb" aria-label="Скрытие"><svg class="i"><use href="#glass"/></svg></button><button class="vb" aria-label="Скрытые"><svg class="i"><use href="#bulb"/></svg></button><button class="vb" aria-label="Свойства вида"><svg class="i"><use href="#chip"/></svg></button><button class="vb" aria-label="Модель"><svg class="i"><use href="#analyt"/></svg></button><button class="vb" aria-label="Зависимости"><svg class="i"><use href="#lockd"/></svg></button>
    <div class="hbar"><i class="ch left"></i><i class="thumbh"></i><i class="ch right"></i></div><i class="grip"></i>
  </div>
</section>

<aside class="browser">
  <div class="phead"><h2>Диспетчер проекта - RAC_ba...</h2><button class="close" aria-label="Закрыть"><svg class="i s"><use href="#x"/></svg></button></div>
  <ul class="tree">
    <li><span class="row open"><svg class="i"><use href="#views"/></svg>Виды (all)</span><ul>
      <li><span class="row open">Планы этажей (Floor Plan</span><ul><li><span class="row">Level 1</span></li><li><span class="row">Level 2</span></li><li><span class="row"><b>Site</b></span></li></ul></li>
      <li><span class="row shut">3D виды (3D View)</span></li><li><span class="row shut">Фасады (Building Elevatio</span></li><li><span class="row shut">Разрезы (Building Section</span></li><li><span class="row shut">Разрезы (Wall Section)</span></li><li><span class="row shut">Виды узлов (Detail)</span></li><li><span class="row shut">Визуализация (Rendering</span></li></ul></li>
    <li><span class="row"><svg class="i"><use href="#legend"/></svg>Легенды</span></li>
    <li><span class="row open"><svg class="i"><use href="#sched"/></svg>Ведомости/Спецификации</span><ul><li><span class="row">How do I</span></li><li><span class="row">Planting Schedule</span></li></ul></li>
    <li><span class="row open"><svg class="i"><use href="#sheet"/></svg>Листы (all)</span><ul><li><span class="row shut">A001 - Title Sheet</span></li><li><span class="row shut">A101 - Site Plan</span></li><li><span class="row shut">A102 - Plans</span></li><li><span class="row shut">A103 - Elevations/Section</span></li><li><span class="row shut">A104 - Elev./Sec./Det.</span></li><li><span class="row shut">A105 - Elev./ Stair Section</span></li></ul></li>
    <li><span class="row shut"><svg class="i"><use href="#family"/></svg>Семейства</span></li>
    <li><span class="row shut"><svg class="i"><use href="#group"/></svg>Группы</span></li>
    <li><span class="row"><svg class="i"><use href="#link"/></svg>Связанные файлы Revit</span></li>
  </ul>
  <div class="hbar bb"><i class="ch left"></i><i class="thumbh"></i><i class="ch right"></i></div>
</aside>
</main>

<footer class="status">
  <p>Щелчок - выбор, TAB - варианты, CTRL - добавление, SHIFT - снятие выбора.</p>
  <svg class="i"><use href="#wset"/></svg>
  <select aria-label="Рабочий набор"><option></option></select>
  <span class="cnt"><svg class="i"><use href="#edreq"/></svg>:0</span>
  <svg class="i"><use href="#opts"/></svg><svg class="i o2"><use href="#optin"/></svg>
  <select aria-label="Вариант" class="opt"><option>Главная модель</option></select>
  <div class="selopts"><button aria-label="Связи"><svg class="i"><use href="#sellink"/></svg></button><button aria-label="Подложка"><svg class="i"><use href="#selund"/></svg></button><button aria-label="Закрепленные"><svg class="i"><use href="#selpin"/></svg></button><button aria-label="Грани"><svg class="i"><use href="#selface"/></svg></button><button aria-label="Перетаскивание"><svg class="i"><use href="#drag"/></svg></button><button aria-label="Процессы"><svg class="i"><use href="#gear"/></svg></button><button class="flt"><svg class="i"><use href="#filter"/></svg>:0</button></div>
  <div class="logo"><div><b>А</b><span>рн</span><b>i</b></div><em>Art</em></div>
</footer>
</div>
</body>
</html>
```
FILE: styles.css
```css
*{box-sizing:border-box}
body{margin:0;height:100vh;background:#000;padding:25px 0;display:flex;flex-direction:column;font:14px/20px "Noto Sans","Noto Sans CJK SC",sans-serif;color:#333;overflow:hidden}
button,input,select{font:inherit;color:inherit;margin:0}
button{background:none;border:0;padding:0;white-space:nowrap}
h1,h2,p,ul{margin:0;padding:0;font-weight:400;font-size:14px}
ul{list-style:none}
.defs{position:absolute;width:0;height:0}
.app{flex:1;display:flex;flex-direction:column;background:#cdcdcd;min-width:0;min-height:0}
.i{width:20px;height:20px;flex:none;display:block}
.i.s{width:16px;height:16px}
.i.xs{width:14px;height:14px}

/* title bar */
.titlebar{display:flex;height:37px;padding-bottom:5px;align-items:center;background:#cdcdcd;flex:none}
.qat,.info,.winbtns{display:flex;align-items:center;flex:none}
.tb{width:30px;height:28px;display:flex;align-items:center;justify-content:center}
.tb.wide{width:36px}
.home{margin-right:5px}
.dd{width:15px;height:20px;display:flex;align-items:center;justify-content:center;flex:none}
.dd::before,.tri{content:"";border:4px solid transparent;border-top:5px solid #444;border-bottom:0;display:inline-block}
.dd.dim::before{border-top-color:#777}
.dd.left::before{border:5px solid transparent;border-right:6px solid #333;border-left:0}
.dd.custom{width:20px;flex-direction:column;gap:2px}
.dd.custom::before{width:10px;height:2px;border:0;background:#333}
.dd.custom::after{content:"";border:5px solid transparent;border-top:6px solid #333;border-bottom:0}
.sep{width:1px;height:26px;background:#bdbdbd;margin:0 4px 0 3px}
.titlebar h1{flex:1;text-align:center;white-space:nowrap;padding-bottom:7px;min-width:0}
.name{width:104px;text-align:left;padding-left:2px}
.winbtns{margin-left:68px}

/* ribbon tabs */
.tabs{display:flex;height:25px;gap:2px;padding-left:1px;flex:none}
.tabs button:not(.dd){padding:0 12px;height:25px}
.tabs button.file{background:#2f7fb6;color:#fff;padding:0 11px}
.tabs .on{background:#eee;color:#222}
.tabs .minrib{margin-left:28px;display:flex;align-items:center}
.minrib span{width:19px;height:12px;border:1px solid #444;border-radius:3px;background:#e8e8e8;display:flex;align-items:center;justify-content:center}
.minrib span::before{content:"";border:4px solid transparent;border-bottom:4px solid #333;border-top:0}
.tabs .dd{height:25px;margin-left:-11px}

/* ribbon panels */
.ribbon{display:flex;height:121px;background:#eee;border-bottom:1px solid #cacaca;flex:none}
.panel{display:flex;flex-direction:column;border-right:1px solid #dedede;padding-top:4px}
.panel:last-child{border-right:0}
.pbody{display:flex;height:93px}
.panel h2{text-align:center;line-height:23px;white-space:nowrap}
h2 .tri{border-width:6px 6px 0;margin:0 0 2px 4px}
.col{display:grid;grid-template-rows:repeat(3,31px)}
.col.two{grid-template-rows:31px 31px;padding-top:14px}
.col button{display:flex;align-items:center;gap:7px;text-align:left;padding-bottom:2px}
.col .tri{margin-left:6px}
.col button:disabled{color:#aaa}
.big{display:flex;flex-direction:column;align-items:center;padding-top:4px;height:89px;line-height:20px;flex:none}
.bi{width:38px;height:38px;margin-bottom:5px;flex:none}
.bi.ar{height:28px;width:34px;margin:5px 0 10px}
.big .tri{margin-top:3px}
.mod{width:75px;margin-left:4px;border:1px solid #2f78c4;background:linear-gradient(#c5def5,#a9cdf0)}
.p-sel{width:84px}
.p-build{width:625px}
.p-build .big:nth-child(1){width:72px}
.p-build .big:nth-child(2){width:46px}
.p-build .col{margin-left:6px;width:133px}
.p-build .col~.col{width:175px;margin:0}
.p-circ{width:146px;padding-left:8px}
.p-model{width:165px;padding-left:7px}
.p-room{width:362px;padding-left:7px}
.p-room .col{width:213px}
.p-room .col+.col{width:140px}
.p-open{width:245px}
.p-open .big{width:52px}
.p-open .big+.big{width:46px}
.p-open .col{margin-left:8px}
.p-datum{width:107px;padding-left:8px}
.p-wp{width:144px}
.p-wp .big{width:54px;margin:0 6px 0 30px}
.optbar{height:34px;background:#eee;border-bottom:1px solid #cacaca;flex:none}

/* work area */
.work{flex:1;display:grid;grid-template-columns:277px minmax(0,1fr) 240px;min-height:0;background:#cdcdcd;grid-template-rows:minmax(0,1fr)}
.phead{display:flex;align-items:center;justify-content:space-between;height:26px;padding:0 3px 0 4px;flex:none}
.phead h2{color:#444;white-space:nowrap}
.props{display:flex;flex-direction:column;background:#f0f0f0;border-right:2px solid #cdcdcd;min-height:0;padding-right:3px}
.typesel{display:flex;align-items:center;height:87px;margin-left:2px;padding:3px 1px 3px 3px;border:1px solid #d6d6d6;border-bottom:0;text-align:left;color:#444;flex:none}
.thumb{width:82px;height:82px;border:1px solid #cfcfcf;display:flex;align-items:center;justify-content:center}
.thumb svg{width:40px;height:40px}
.tname{flex:1;margin-left:5px}
.typesel .tri{border-width:5px 5px 0}
.inst{display:flex;height:29px;align-items:center;padding-left:2px;color:#222;flex:none}
select{appearance:none;border:0;border-radius:0;background:#fff no-repeat right 5px center/11px 7px url("data:image/svg+xml,%3Csvg xmlns='http://www.w3.org/2000/svg' viewBox='0 0 11 7'%3E%3Cpath d='M1 1l4.500 4.500L10 1' fill='none' stroke='%23777'/%3E%3C/svg%3E")}
.inst select{width:138px;height:28px;border:1px solid #aaa;background-color:#e3e3e3;padding:0 20px 0 4px}
.inst button{display:flex;align-items:center;gap:5px;margin-left:6px}
.inst .i{width:17px;height:17px}
.pscroll{flex:1;display:flex;min-height:0;overflow:hidden}
.ptable{flex:1;overflow:hidden;padding-left:2px;background:#fff;color:#222}
table{width:100%;table-layout:fixed;border-collapse:collapse}
.c1{width:117px}.c3{width:15px}
tr{height:24px}
th,td{font-weight:400;text-align:left;padding:0 0 0 10px;height:24px;border-bottom:1px dotted #777;border-right:1px dotted #777;white-space:nowrap;overflow:hidden;line-height:20px}
td{padding:0 0 0 2px}
.grp th{border:0;padding-left:2px;background:#dcdcdc no-repeat right 4px top 6px/9px 10px url("data:image/svg+xml,%3Csvg xmlns='http://www.w3.org/2000/svg' viewBox='0 0 9 10'%3E%3Cpath d='M1.500 4.500l3-3 3 3M1.500 8.500l3-3 3 3' fill='none' stroke='%23000' stroke-width='1.500'/%3E%3C/svg%3E")}
.off{color:#888}
td button{display:block;width:100%;height:22px;line-height:18px;background:#e1e1e1;border:1px solid #adadad;border-width:1px 2px 2px 1px;text-align:center}
td.edit{padding:0}
.edit input{display:block;width:100%;height:23px;border:1px solid #000;padding:0 5px;background:#fff}
input[type=checkbox]{appearance:none;display:block;width:16px;height:16px;border:1px solid #333;background:#fff}
input[type=checkbox]:checked{background:#fff url("data:image/svg+xml,%3Csvg xmlns='http://www.w3.org/2000/svg' viewBox='0 0 14 14'%3E%3Cpath d='M2 7l3 4 7-8' fill='none' stroke='%23333' stroke-width='1.300'/%3E%3C/svg%3E")}
.vbar{width:21px;background:#f0f0f0;display:flex;flex-direction:column;align-items:center;flex:none}
.ch{width:20px;height:20px;display:flex;align-items:center;justify-content:center;flex:none}
.ch::before{content:"";width:7px;height:7px;border:solid #444;border-width:2px 0 0 2px;transform:rotate(45deg)}
.ch.down::before{transform:rotate(225deg)}
.ch.left::before{transform:rotate(-45deg)}
.ch.right::before{transform:rotate(135deg)}
.thumbv{width:19px;flex:0 0 55%;background:#cdcdcd}
.vbar .down{margin-top:auto}
.pfoot{display:flex;align-items:center;justify-content:space-between;height:33px;padding:0 2px 5px 4px;flex:none}
a{color:#1f66b8}
.pfoot button{width:86px;height:26px;background:#cccccc;border:1px solid #bcbcbc;color:#888}

/* drawing view */
.view{display:flex;flex-direction:column;min-width:0;min-height:0}
.vtabs{display:flex;height:26px;align-items:center;flex:none;color:#444;padding-left:7px}
.vtabs button{display:flex;align-items:center;gap:11px;height:26px;width:176px}
.vtabs .on{background:#eee;width:159px;padding:0 5px 0 6px;gap:8px;color:#222;font-weight:700}
.vtabs .on .xs{margin-left:auto}
.vtabs button:nth-child(3){padding-left:6px;gap:8px;width:100px}
.vtabs .dd{margin:0 2px 0 auto}
.canvas{flex:1;display:flex;min-height:0;background:#f0f0f0;border-right:2px solid #cdcdcd;padding-right:3px}
.sheet{flex:1;position:relative;background:#fff;min-width:0}
.drawing{width:100%;height:100%;display:block}
.cv{width:19px}
.cv .ch.up{margin-bottom:336px}
.cv .thumbv{flex-basis:21px;width:19px}
.ln{fill:none;stroke:#000;stroke-width:1;shape-rendering:crispEdges}
.ln path,.ln circle{vector-effect:non-scaling-stroke}
.ln .dash{stroke-dasharray:11 8}
.ln .dot{stroke:#777;stroke-dasharray:2 2}
.fill path,.ln .shade{fill:#666;stroke:none}
.tags text{font:14px "Liberation Sans",sans-serif;fill:#555;stroke:none}
.tags path{fill:#fff}
.survey text{font:5px "Liberation Sans",sans-serif;fill:#444}
.marks circle{fill:#5d86bd;stroke:#2d4f85}
.marks text{font:bold 8px "Liberation Sans",sans-serif;fill:#fff;text-anchor:middle}
.navbar{position:absolute;right:1px;top:3px;width:36px;height:117px;border:2px solid #c4c4c4;border-radius:5px;background:#f3f3f3;display:flex;flex-direction:column;align-items:center}
.navbar .whl{width:24px;height:24px;margin-top:5px;flex:none}
.navbar b{font-size:10px;line-height:10px;color:#8ea3c4;margin:-7px 0 3px 15px}
.navbar hr{width:28px;border:0;border-top:1px solid #c4c4c4;margin:4px 0 7px}
.navbar .tri{border-width:4px 3px 0;border-top-color:#999}
.navbar .i{margin-bottom:6px;width:17px;height:17px}
.dotb{width:8px;height:8px;border:2px solid #bbb;border-radius:4px;align-self:flex-end;flex:none;margin:2px}
.dotb.end{margin-top:auto}
.vctl{display:flex;align-items:center;height:25px;background:#f0f0f0;border-bottom:3px solid #ddd;border-right:2px solid #cdcdcd;padding-left:2px;flex:none}
.scale{position:relative;width:89px;height:22px;padding-left:6px;text-align:center;font-size:13px;background:linear-gradient(90deg,#dfe3f2 75%,#f0f0f0)}
.cur{position:absolute;width:60px;height:60px;left:22px;top:-21px;z-index:2}
.vb{width:25px;height:22px;display:flex;align-items:center;justify-content:center}
.vctl .hbar{flex:1}
.hbar{display:flex;align-items:center;height:20px;background:#f0f0f0}
.hbar .left{margin-right:47%}
.hbar .thumbh{height:20px;width:21px;background:#cdcdcd}
.hbar .right{margin-left:auto}
.grip{width:15px;height:13px;margin:0 3px 0 8px;background:radial-gradient(circle,#aaa 1px,transparent 2px) 0 0/5px 5px;clip-path:polygon(100% 0,100% 100%,0 100%)}

/* project browser */
.browser{display:flex;flex-direction:column;background:#f0f0f0;min-width:0;min-height:0;margin-left:2px;border-bottom:3px solid #f0f0f0}
.tree{flex:1;background:#fff;color:#222;padding-left:5px;overflow:hidden}
.tree li{position:relative;padding-left:8px}
.tree li::before{content:"";position:absolute;left:7px;top:0;height:100%;border-left:1px dotted #888}
.tree li:last-child::before{height:11px}
.tree>li:first-child::before{top:11px}
.tree ul{padding-left:18px}
.row{display:flex;align-items:center;height:22px;gap:7px;white-space:nowrap;padding-left:15px;position:relative}
.row::before{content:"";position:absolute;left:0;top:11px;width:12px;border-top:1px dotted #888}
.open::after,.shut::after{content:"";position:absolute;left:-7px;top:5px;width:13px;height:13px;border:1px solid #888;background:linear-gradient(#446,#446) center/9px 1px no-repeat,#f4f4f4}
.shut::after{background:linear-gradient(#446,#446) center/9px 1px no-repeat,linear-gradient(#446,#446) center/1px 9px no-repeat,#f4f4f4}
.tree ul .row{padding-left:21px}
.tree ul .row::before{width:18px}
.row b{background:#e6e4e6;padding:0 3px;margin-left:-3px;color:#000}
.bb{padding:0 3px 0 2px}
.bb .left{margin-right:2px}
.bb .thumbh{width:166px}

/* status bar */
.status{display:flex;align-items:center;height:32px;background:#cdcdcd;position:relative;padding-left:2px;flex:none;color:#222}
.status p{width:551px;white-space:nowrap}
.status select{width:254px;height:22px;margin-left:8px;padding:0 4px;color:#777;line-height:20px}
.cnt{display:flex;align-items:center;gap:6px;width:61px;margin:0 0 0 8px}
.o2{margin-left:10px}
.selopts{margin-left:auto;display:flex;padding-right:77px}
.selopts button{width:30px;height:28px;display:flex;align-items:center;justify-content:center}
.selopts .flt{width:36px;gap:2px;justify-content:flex-start;padding-left:2px}
.logo{position:absolute;right:12px;bottom:-1px;width:40px;height:40px;background:#ebebeb;padding:3px 2px}
.logo div{display:flex;font-size:15px;line-height:18px;color:#cf4f68}
.logo span{color:#999;font-size:12px}
.logo em{display:block;color:#3a6fa0;text-align:right;font-size:11px;line-height:16px;padding-right:3px}
```
